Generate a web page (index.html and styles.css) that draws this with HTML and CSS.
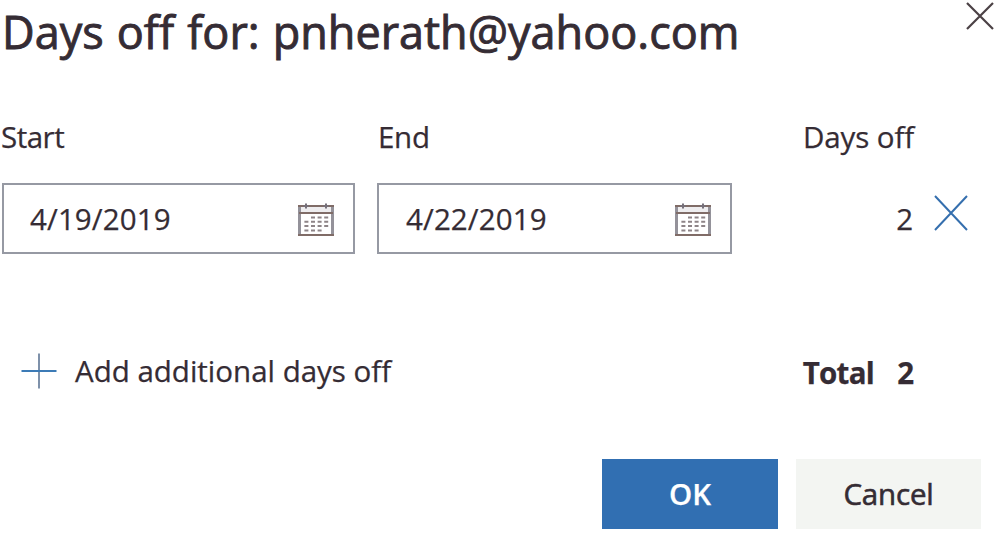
FILE: index.html
```html
<!DOCTYPE html>
<html lang="en">
<head>
<meta charset="utf-8">
<title>Days off</title>
<link rel="stylesheet" href="styles.css">
</head>
<body>
<svg class="defs" width="0" height="0" aria-hidden="true">
  <symbol id="calendar" viewBox="0 0 38 34">
    <path class="cal-fill" d="M2 3h34v7H2z"/>
    <path class="cal-side" d="M2.500 2v31M35.500 2v31"/>
    <path class="cal-line" d="M1 3h36M2 10h34M1 32h36"/>
    <path class="cal-ring" d="M9 .5v5M29 .5v5M6.500 3h5M26.500 3h5"/>
    <path class="cal-days" d="M14 14.500h18M7.400 18.800h25M7.400 23.100h25M7.400 27.400h18"/>
  </symbol>
</svg>
<main class="dialog">
  <header class="header">
    <h1 class="title">Days off for: pnherath@yahoo.com</h1>
    <button class="close" aria-label="Close"><svg width="28" height="28" viewBox="0 0 28 28"><path d="M1 1l26 26M27 1L1 27"/></svg></button>
  </header>
  <div class="row labels">
    <span class="start">Start</span>
    <span class="end">End</span>
    <span class="days">Days off</span>
  </div>
  <div class="row fields">
    <div class="date"><span>4/19/2019</span><svg class="calendar" width="38" height="34"><use href="#calendar"/></svg></div>
    <div class="date"><span class="until">4/22/2019</span><svg class="calendar" width="38" height="34"><use href="#calendar"/></svg></div>
    <div class="count"><span>2</span><button class="remove" aria-label="Remove"><svg width="34" height="36" viewBox="0 0 34 36"><path d="M1 1l32 34M33 1L1 35"/></svg></button></div>
  </div>
  <div class="summary">
    <button class="add"><svg width="36" height="36" viewBox="0 0 36 36"><path class="plus-v" d="M18 .5v35"/><path class="plus-h" d="M.5 18h35"/></svg><span>Add additional days off</span></button>
    <div class="total"><span class="total-label">Total</span><span>2</span></div>
  </div>
  <footer class="actions">
    <button class="button primary">OK</button>
    <button class="button secondary">Cancel</button>
  </footer>
</main>
</body>
</html>
```
FILE: styles.css
```css
* { box-sizing: border-box; }
body {
  margin: 0;
  width: 999px;
  height: 534px;
  overflow: hidden;
  background: #fff;
  color: #352c34;
  font: 29.5px/40px "Open Sans", "Noto Sans", sans-serif;
  font-variant-ligatures: none;
  -webkit-text-stroke: 0.25px currentColor;
}
button {
  border: 0;
  padding: 0;
  background: none;
  color: inherit;
  font: inherit;
}
svg { display: block; fill: none; flex: none; }
.defs { position: absolute; }
.dialog { display: flex; flex-direction: column; height: 534px; }
.header {
  display: flex;
  justify-content: space-between;
  height: 117px;
  padding: 0 5px 0 2px;
}
.title {
  margin: 0;
  font-size: 45px;
  font-weight: 400;
  line-height: 63px;
  letter-spacing: 0;
  word-spacing: 1.4px;
  white-space: nowrap;
  -webkit-text-stroke-width: 0.9px;
}
.close { height: 28px; margin-top: 2px; stroke: #4b4145; stroke-width: 2.2; }
.row {
  display: grid;
  grid-template-columns: 353px 355px 214px;
  column-gap: 22px;
  padding-left: 2px;
}
.labels { height: 66px; white-space: nowrap; }
.start { margin-left: -1px; letter-spacing: -0.5px; }
.end { margin-left: 1px; letter-spacing: -0.3px; }
.days { padding-left: 49px; letter-spacing: -0.1px; }
.fields { height: 71px; align-items: center; }
.date {
  display: flex;
  align-items: center;
  justify-content: space-between;
  height: 71px;
  padding: 1px 18px 0 26px;
  border: 2px solid #9699a3;
  letter-spacing: 0.1px;
}
.until { padding-left: 1px; }
.calendar { margin-top: 1px; }
.cal-fill { fill: #eeedef; }
.cal-line { stroke: #806c67; stroke-width: 2; }
.cal-side { stroke: #94929a; stroke-width: 3; }
.cal-ring { stroke: #77717a; stroke-width: 2; }
.cal-days { stroke: #8e8487; stroke-width: 2; stroke-dasharray: 4 2.600; }
.count {
  display: flex;
  align-items: center;
  justify-content: flex-end;
  gap: 21px;
  padding-top: 1px;
}
.remove { stroke: #356fae; stroke-width: 2; margin-top: -13px; }
.summary {
  display: flex;
  justify-content: space-between;
  margin-top: 98px;
  padding: 0 85px 0 21px;
}
.add {
  display: flex;
  align-items: center;
  gap: 18px;
  height: 38px;
  white-space: nowrap;
}
.plus-v { stroke: #7e91aa; stroke-width: 2; }
.plus-h { stroke: #3c7bb6; stroke-width: 2; }
.total { display: flex; gap: 23px; margin-top: 1px; font-weight: 700; }
.total-label { letter-spacing: -0.7px; }
.actions {
  display: flex;
  justify-content: flex-end;
  gap: 18px;
  margin-top: auto;
  padding: 0 18px 5px 0;
}
.button { height: 70px; }
.primary { width: 176px; background: #316fb2; color: #fff; font-weight: 600; }
.secondary { width: 185px; background: #f3f5f2; letter-spacing: -0.2px; -webkit-text-stroke-width: 0.6px; }
```
